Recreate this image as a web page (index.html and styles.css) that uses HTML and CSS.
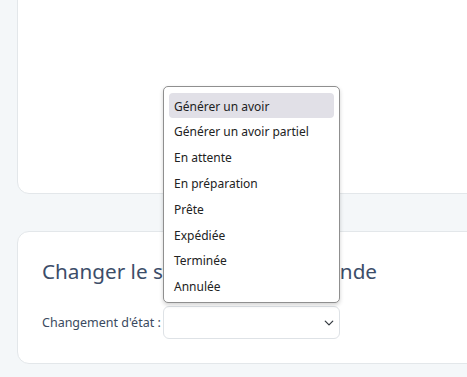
FILE: index.html
```html
<!DOCTYPE html>
<html lang="fr">
<head>
    <meta charset="UTF-8">
    <meta name="viewport" content="width=device-width, initial-scale=1.0">
    <title>Commande</title>
    <link rel="stylesheet" href="styles.css">
</head>
<body>
    <div class="page">
        <!-- Bloc du haut -->
        <div class="card card-top"></div>

        <!-- Changement de statut -->
        <div class="card card-status">
            <h2 class="card-title">Changer le statut de la commande</h2>
            <div class="form-row">
                <label class="form-label" for="etat">Changement d'état :</label>
                <div class="select-wrap">
                    <div class="select-box" id="etat"></div>
                    <svg class="chevron" width="10" height="10" viewBox="0 0 16 16">
                        <path d="M2 5l6 6 6-6" fill="none" stroke="#343a40" stroke-width="2" stroke-linecap="round" stroke-linejoin="round"/>
                    </svg>
                    <!-- Liste ouverte -->
                    <ul class="options">
                        <li class="option active">Générer un avoir</li>
                        <li class="option">Générer un avoir partiel</li>
                        <li class="option">En attente</li>
                        <li class="option">En préparation</li>
                        <li class="option">Prête</li>
                        <li class="option">Expédiée</li>
                        <li class="option">Terminée</li>
                        <li class="option">Annulée</li>
                    </ul>
                </div>
            </div>
        </div>
    </div>
</body>
</html>
```
FILE: styles.css
```css
html, body {
    margin: 0;
    padding: 0;
    height: 100%;
    overflow: hidden;
}

body {
    font-family: "Noto Sans", "Open Sans", sans-serif;
    background-color: #f4f7f9;
    color: #212529;
}

.page {
    padding-left: 17px;
    width: 520px;
}

.card {
    background-color: #ffffff;
    border: 1px solid #e3e7ea;
    border-radius: 12px;
    box-sizing: border-box;
}

.card-top {
    margin-top: -20px;
    height: 214px;
}

.card-status {
    margin-top: 37px;
    height: 133px;
    padding: 24px 24px 0 24px;
}

.card-title {
    margin: 0;
    font-size: 20.7px;
    font-weight: 400;
    line-height: 30px;
    color: #3c4d69;
}

.form-row {
    display: flex;
    align-items: center;
    margin-top: 20px;
}

.form-label {
    font-size: 12.5px;
    color: #3a4a60;
    width: 121px;
}

.select-wrap {
    position: relative;
}

.select-box {
    width: 177px;
    height: 33px;
    border: 1px solid #dee2e6;
    border-radius: 6px;
    box-sizing: border-box;
    background: #fff;
}

.chevron {
    position: absolute;
    right: 6px;
    top: 12px;
}

.options {
    position: absolute;
    left: 0;
    bottom: 36px;
    width: 177px;
    box-sizing: border-box;
    margin: 0;
    padding: 6px 5px 3px 5px;
    list-style: none;
    background: #fff;
    border: 1px solid #8f8f8f;
    border-radius: 5px;
    box-shadow: 0 2px 4px rgba(0, 0, 0, 0.18);
}

.option {
    box-sizing: border-box;
    height: 25.8px;
    padding-top: 2px;
    line-height: 23.8px;
    padding-left: 5px;
    font-size: 12px;
    color: #222;
    border-radius: 4px;
}

.option.active {
    background-color: #e1e0e7;
}
```
